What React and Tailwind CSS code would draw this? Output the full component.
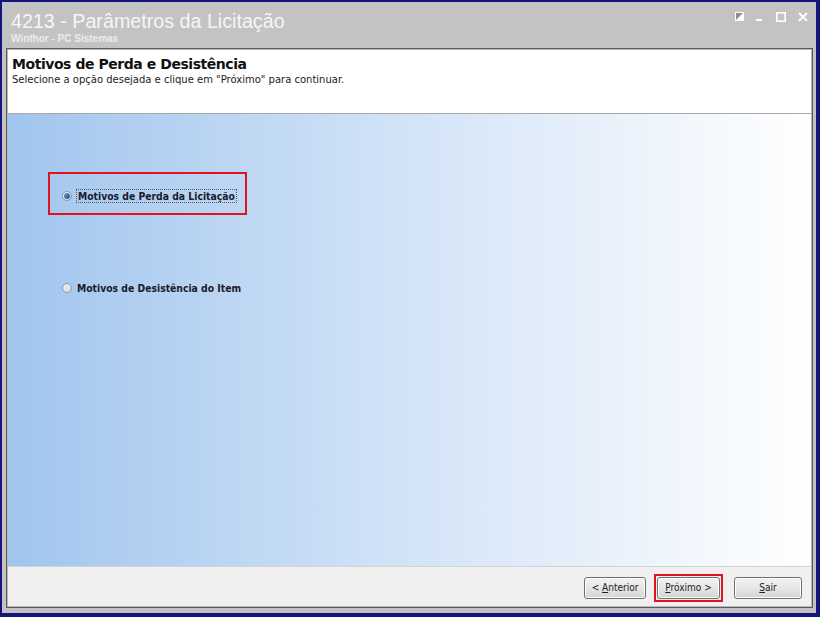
import React from 'react';

const tahoma = { fontFamily: '"DejaVu Sans", Verdana, sans-serif' };

function WinButton({ children, className = '' }) {
  return (
    <button
      className={`h-[22px] rounded-[3px] border border-[#707070] bg-gradient-to-b from-[#f2f2f2] via-[#e6e6e6] to-[#d4d4d4] text-[10px] text-[#222] font-['DejaVu_Sans_Condensed',sans-serif] shadow-[inset_0_0_0_1px_#fcfcfc] ${className}`}
    >
      {children}
    </button>
  );
}

function Radio({ checked }) {
  return (
    <span className="w-[10px] h-[10px] rounded-full border border-[#8a99a8] bg-gradient-to-br from-[#f4f4f4] to-[#cfd6dc] flex items-center justify-center shrink-0">
      {checked && <span className="w-[6px] h-[6px] rounded-full bg-gradient-to-br from-[#5ea6d8] to-[#174f7e]" />}
    </span>
  );
}

export default function App() {
  return (
    <div className="w-[820px] h-[617px] bg-[#14147c] pl-[2px] pt-[2px] pr-[4px] pb-[4px] overflow-hidden">
      <div className="w-full h-full bg-[#c3c3c3] flex flex-col">
        {/* Title bar */}
        <div className="h-[46px] shrink-0 flex justify-between pl-[9px] pr-[8px] font-['Liberation_Sans',Arial,sans-serif]">
          <div className="flex flex-col">
            <div className="text-[19.7px] leading-[24px] mt-[7px] text-[#f6f6f6]">4213 - Parâmetros da Licitação</div>
            <div className="text-[10px] leading-[12px] font-bold text-[#ececec]">Winthor - PC Sistemas</div>
          </div>
          <div className="flex items-start pt-[10px]">
            <svg width="9" height="9" viewBox="0 0 9 9">
              <rect x="0" y="0" width="9" height="9" fill="#ffffff" />
              <polygon points="0,0 9,0 0,9" fill="#8e8e8e" />
              <rect x="0.5" y="0.5" width="8" height="8" fill="none" stroke="#ffffff" />
            </svg>
            <svg width="6" height="10" viewBox="0 0 6 10" className="ml-[12px]">
              <rect x="0" y="7" width="6" height="2" fill="#ffffff" />
            </svg>
            <svg width="10" height="10" viewBox="0 0 10 10" className="ml-[14px]">
              <rect x="0.8" y="0.8" width="8.4" height="8.4" fill="none" stroke="#ffffff" strokeWidth="1.6" />
            </svg>
            <svg width="10" height="10" viewBox="0 0 10 10" className="ml-[12px]">
              <path d="M1 1 L9 9 M9 1 L1 9" stroke="#ffffff" strokeWidth="1.8" />
            </svg>
          </div>
        </div>

        {/* Inner panel */}
        <div className="flex-1 ml-[4px] mr-[3px] mb-[5px] border border-[#5a5a5a] flex">
          <div className="flex-1 border border-[#b8b8b8] flex flex-col min-h-0">
            {/* Header */}
            <div className="h-[64px] shrink-0 bg-white border-b border-[#a8a8a8] pl-[4px] pt-[6px]" style={tahoma}>
              <div className="text-[14px] leading-[17px] font-bold text-[#111] tracking-[-0.45px]">Motivos de Perda e Desistência</div>
              <div className="text-[10px] leading-[13px] text-[#222]">Selecione a opção desejada e clique em "Próximo" para continuar.</div>
            </div>

            {/* Body */}
            <div className="flex-1 bg-gradient-to-r from-[#a1c5ee] via-[#d3e4f7] to-[#ffffff] flex flex-col pl-[40px] pt-[58px] font-['DejaVu_Sans_Condensed',sans-serif]">
              <div className="w-[199px] h-[43px] border-[2px] border-[#e0141c] flex items-center pl-[12px] pt-[5px]">
                <Radio checked />
                <span className="ml-[4px] px-[1px] border border-dotted border-[#555] text-[10.3px] leading-[12px] font-bold text-[#1a1a2a]">Motivos de Perda da Licitação</span>
              </div>
              <div className="flex items-center pl-[14px] mt-[67px]">
                <Radio />
                <span className="ml-[5px] text-[10.3px] leading-[12px] font-bold text-[#1a1a2a]">Motivos de Desistência do Item</span>
              </div>
            </div>

            {/* Footer */}
            <div className="h-[40px] shrink-0 bg-[#f0f0f0] border-t border-[#d4d4d4] flex items-center justify-end pr-[9px] pt-[2px]">
              <WinButton className="w-[62px]">&lt; <u>A</u>nterior</WinButton>
              <div className="ml-[8px] border-[2px] border-[#e0141c] p-[1px] flex">
                <WinButton className="w-[63px]"><u>P</u>róximo &gt;</WinButton>
              </div>
              <WinButton className="w-[68px] ml-[11px]"><u>S</u>air</WinButton>
            </div>
          </div>
        </div>
      </div>
    </div>
  );
}
